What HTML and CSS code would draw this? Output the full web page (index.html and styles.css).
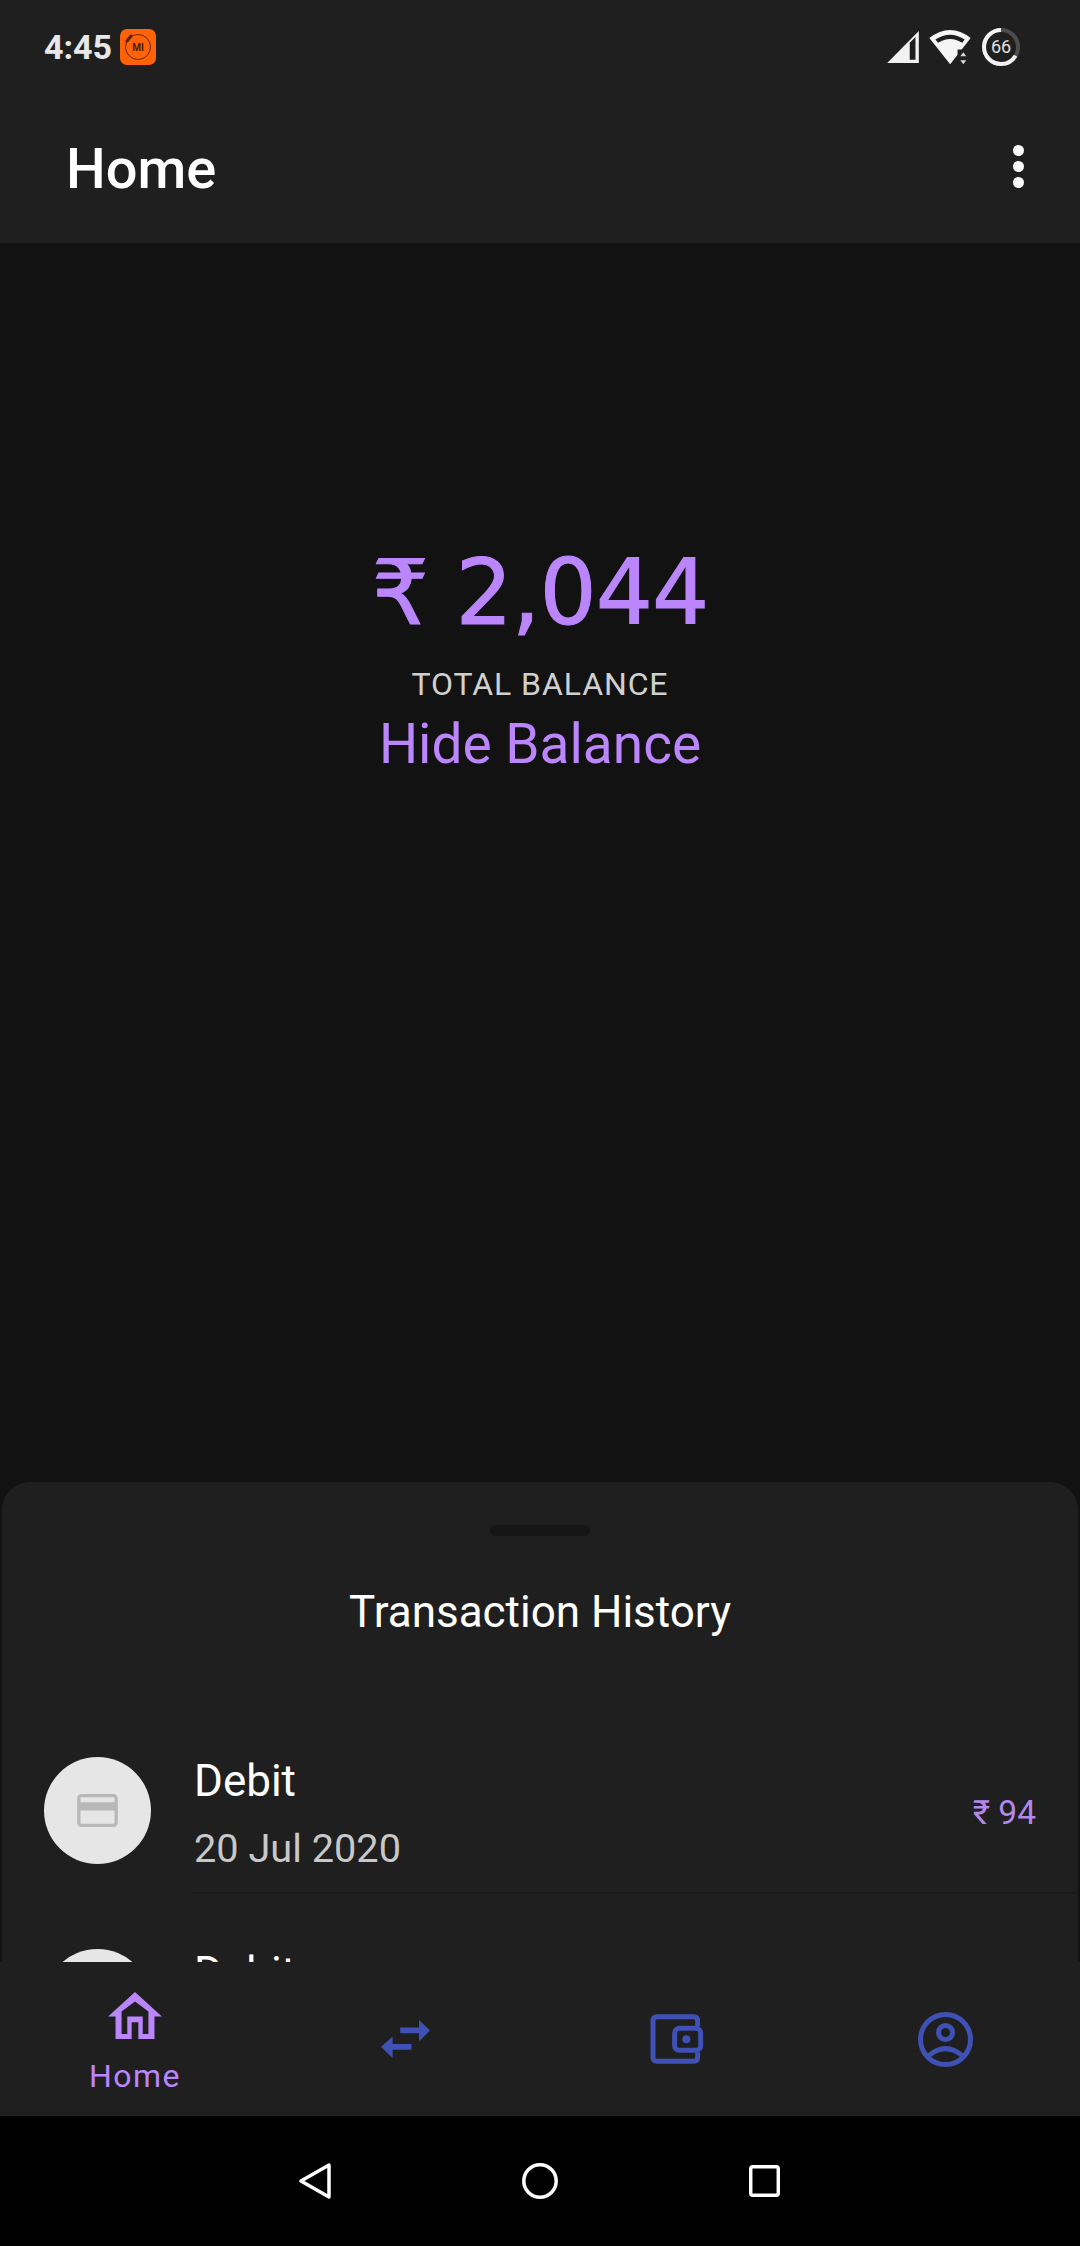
FILE: index.html
```html
<!DOCTYPE html>
<html lang="en">
<head>
<meta charset="utf-8">
<title>Home</title>
<link rel="stylesheet" href="styles.css">
</head>
<body>
<div class="screen">
  <header class="top">
    <div class="status">
      <div class="status-left">
        <span class="clock">4:45</span>
        <svg class="mi" width="36" height="36" viewBox="0 0 36 36">
          <rect width="36" height="36" rx="7" fill="#ff6207"/>
          <circle cx="18" cy="18" r="12.5" fill="none" stroke="#6e2600" stroke-width="1"/>
          <path d="M7 12 L11 7" stroke="#5c2000" stroke-width="3" stroke-linecap="round"/>
          <text x="18" y="22" class="mi-text">MI</text>
        </svg>
      </div>
      <div class="status-right">
        <svg width="32" height="32" viewBox="0 0 94 95"><path fill="#f2f2f2" fill-rule="evenodd" d="M0 95 L94 0 V95 Z M67 35 L84 18 V85 H67 Z"/></svg>
        <svg width="42" height="35" viewBox="0 0 123 104">
          <path fill="#f5f5f5" d="M62 102 L0 24 Q62 -24 123 24 Z"/>
          <path fill="#1f1f1f" d="M18 28 Q62 0 105 28 L98 38 Q62 15 26 38 Z"/>
          <rect x="84" y="58" width="39" height="46" fill="#1f1f1f"/>
          <path fill="#d8d8d8" d="M101 66 L92 78 H110 Z M101 102 L92 90 H110 Z"/>
        </svg>
        <svg class="battery" width="40" height="40" viewBox="0 0 40 40">
          <circle cx="20" cy="20" r="17" fill="none" stroke="#4d4d4d" stroke-width="4"/>
          <circle class="battery-arc" cx="20" cy="20" r="17" fill="none" stroke="#f2f2f2" stroke-width="4" stroke-dasharray="70.5 107"/>
          <text x="20" y="26" class="battery-text">66</text>
        </svg>
      </div>
    </div>
    <div class="appbar">
      <h1 class="title">Home</h1>
      <div class="menu"><i></i><i></i><i></i></div>
    </div>
  </header>

  <main class="balance">
    <div class="amount">₹ 2,044</div>
    <div class="amount-label">TOTAL BALANCE</div>
    <div class="amount-toggle">Hide Balance</div>
  </main>

  <section class="sheet">
    <div class="handle"></div>
    <h2 class="sheet-title">Transaction History</h2>
    <div class="row">
      <div class="avatar">
        <svg width="41" height="33" viewBox="0 0 123 100"><rect x="5" y="5" width="113" height="90" rx="8" fill="none" stroke="#b8b8b8" stroke-width="10"/><rect x="8" y="25" width="107" height="25" fill="#b8b8b8"/></svg>
      </div>
      <div class="row-body">
        <div class="row-text">
          <div class="row-name">Debit</div>
          <div class="row-date">20 Jul 2020</div>
        </div>
        <div class="row-amount">₹ 94</div>
      </div>
    </div>
    <div class="row">
      <div class="avatar">
        <svg width="41" height="33" viewBox="0 0 123 100"><rect x="5" y="5" width="113" height="90" rx="8" fill="none" stroke="#b8b8b8" stroke-width="10"/><rect x="8" y="25" width="107" height="25" fill="#b8b8b8"/></svg>
      </div>
      <div class="row-body">
        <div class="row-text">
          <div class="row-name">Debit</div>
          <div class="row-date">20 Jul 2020</div>
        </div>
        <div class="row-amount">₹ 94</div>
      </div>
    </div>
  </section>

  <nav class="tabs">
    <div class="tab tab-active">
      <svg width="54" height="47" viewBox="0 0 160 140"><path fill="#bb86fc" fill-rule="evenodd" d="M80 0 L160 73 H138 V140 H22 V73 H0 Z M40 125 V58 L80 28 L120 58 V125 H103 V73 H57 V125 Z M70 90 H90 V140 H70 Z"/></svg>
      <span class="tab-label">Home</span>
    </div>
    <div class="tab">
      <svg width="49" height="38" viewBox="0 0 148 115"><path fill="#3f51b5" d="M58 23 H115 V0 L148 32 L115 65 V40 H58 Z M92 73 H35 V50 L0 82 L35 115 V90 H92 Z"/></svg>
    </div>
    <div class="tab tab-wallet">
      <svg width="54" height="50" viewBox="0 0 160 150"><g fill="none" stroke="#3f51b5" stroke-width="15"><path d="M142 37 V20 Q142 8 130 8 H20 Q8 8 8 20 V130 Q8 142 20 142 H130 Q142 142 142 130 V115"/><rect x="73" y="43" width="78" height="66" rx="14"/></g><circle cx="108" cy="76" r="12" fill="#3f51b5"/></svg>
    </div>
    <div class="tab">
      <svg width="55" height="55" viewBox="0 0 164 164"><g fill="none" stroke="#3f51b5" stroke-width="15"><circle cx="82" cy="82" r="74.5"/><circle cx="82" cy="61" r="21"/><path d="M32 130 Q82 88 132 130"/></g></svg>
    </div>
  </nav>

  <footer class="sysnav">
    <svg width="32" height="36" viewBox="0 0 32 36"><path d="M2 18 L30 2 V34 Z" fill="none" stroke="#fff" stroke-width="3.5" stroke-linejoin="round"/></svg>
    <svg width="36" height="36" viewBox="0 0 36 36"><circle cx="18" cy="18" r="16.2" fill="none" stroke="#fff" stroke-width="3.5"/></svg>
    <svg width="31" height="32" viewBox="0 0 31 32"><rect x="1.7" y="1.7" width="27.6" height="28.6" rx="2" fill="none" stroke="#fff" stroke-width="3.5"/></svg>
  </footer>
</div>
</body>
</html>
```
FILE: styles.css
```css
* { box-sizing: border-box; }
html, body { margin: 0; padding: 0; background: #121212; }
.screen {
  width: 1080px;
  height: 2246px;
  display: flex;
  flex-direction: column;
  overflow: hidden;
  font-family: Roboto, "Noto Sans", sans-serif;
  background: #121212;
}
.top { background: #1f1f1f; flex: none; }
.status {
  height: 94px;
  padding: 0 59px 0 44px;
  display: flex;
  align-items: center;
  justify-content: space-between;
}
.status-left { display: flex; align-items: center; gap: 8px; }
.clock { color: #e8e8e8; font-size: 34px; font-weight: 700; }
.mi-text { font: 700 10px Roboto, sans-serif; fill: #4a1a00; text-anchor: middle; }
.status-right { display: flex; align-items: center; gap: 10px; }
.battery-arc { transform: rotate(-90deg) scaleY(-1); transform-origin: 20px 20px; }
.battery-text { font: 400 18px Roboto, sans-serif; fill: #e0e0e0; text-anchor: middle; }
.appbar {
  height: 149px;
  padding: 0 56px 0 66px;
  display: flex;
  align-items: center;
  justify-content: space-between;
}
.title { margin: 0; color: #fff; font-size: 56px; font-weight: 500; }
.menu { display: flex; flex-direction: column; gap: 5px; margin-top: -4px; }
.menu i { display: block; width: 11px; height: 11px; border-radius: 50%; background: #fff; }

.balance {
  flex: 1;
  padding-top: 294px;
  display: flex;
  flex-direction: column;
  align-items: center;
}
.amount {
  color: #bb86fc;
  font-family: "DejaVu Sans", Lato, sans-serif;
  font-size: 90px;
  line-height: 112px;
  letter-spacing: -1px;
  -webkit-text-stroke: 1px #bb86fc;
}
.amount-label { margin-top: 15px; color: #d0d0d0; font-size: 32px; line-height: 40px; letter-spacing: .9px; }
.amount-toggle { margin-top: 8px; color: #bb86fc; font-size: 55px; line-height: 64px; }

.sheet {
  flex: none;
  height: 480px;
  margin: 0 2px;
  padding-top: 43px;
  background: #1f1f1f;
  border-radius: 28px 28px 0 0;
  overflow: hidden;
}
.handle { width: 100px; height: 11px; margin: 0 auto; border-radius: 6px; background: #161616; }
.sheet-title { margin: 46px 0 0; color: #fff; font-size: 44px; font-weight: 400; line-height: 60px; text-align: center; }
.sheet-title + .row { margin-top: 60px; }
.row { display: flex; height: 192px; padding-left: 42px; }
.avatar {
  flex: none;
  width: 107px;
  height: 107px;
  margin-top: 55px;
  border-radius: 50%;
  background: #e6e6e6;
  display: flex;
  align-items: center;
  justify-content: center;
}
.row-body {
  flex: 1;
  margin-left: 41px;
  padding: 49px 42px 0 2px;
  display: flex;
  justify-content: space-between;
  border-bottom: 2px solid #1a1a1a;
}
.row-name { color: #fff; font-size: 44px; line-height: 60px; }
.row-date { margin-top: 13px; color: #c8c8c8; font-size: 39.7px; line-height: 50px; }
.row-amount { margin-top: 42px; color: #b388eb; font-size: 33.5px; line-height: 40px; }

.tabs {
  flex: none;
  height: 154px;
  background: #1f1f1f;
  display: grid;
  grid-template-columns: repeat(4, 1fr);
}
.tab { display: flex; flex-direction: column; align-items: center; justify-content: center; }
.tab-active { justify-content: flex-start; padding-top: 30px; }
.tab-wallet { padding-left: 3px; }
.tab-label { margin-top: 18px; color: #bb86fc; font-size: 32px; line-height: 38px; letter-spacing: 1.5px; }

.sysnav {
  flex: none;
  height: 130px;
  padding-right: 1px;
  background: #000;
  display: flex;
  align-items: center;
  justify-content: center;
  gap: 191px;
}
```
